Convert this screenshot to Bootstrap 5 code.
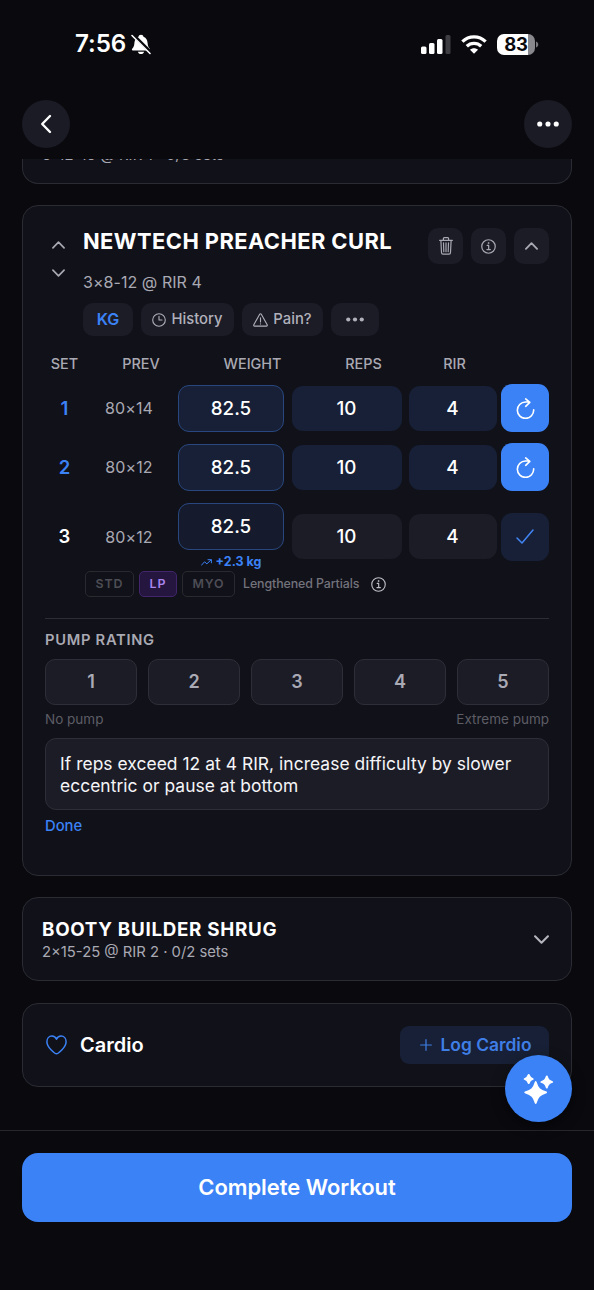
<!DOCTYPE html>
<html lang="en" data-bs-theme="dark">
<head>
<meta charset="utf-8">
<meta name="viewport" content="width=device-width, initial-scale=1">
<title>Workout</title>
<link href="https://cdn.jsdelivr.net/npm/bootstrap@5.3.0/dist/css/bootstrap.min.css" rel="stylesheet">
<style>
:root{--page:#09090e;--panel:#111119;--line:#2b2b34;--surface:#1c1c27;--accent:#3b82f6;--tint:#172036;--soft:#a9a9b3;--dim:#5d5d65}
body{background:var(--page);color:#fff;font-family:Inter,"Liberation Sans",sans-serif;line-height:1;overflow:hidden}
svg{display:block;flex:none}
.ico{fill:none;stroke:currentColor;stroke-linecap:round;stroke-linejoin:round}
.screen{height:1290px}
.statusbar{height:88px;padding:1px 55px 0 75px}
.clock{font-size:24.2px;font-weight:600;letter-spacing:-.1px}
.batt{width:38px;height:21px;border-radius:7px;background:linear-gradient(90deg,#fff 82%,#88888d 82%);color:#09090e;font-size:18.5px;font-weight:700;letter-spacing:-.2px}
.topbar{height:71px;padding:12px 22px 0}
.round-btn{width:48px;height:48px;border-radius:50%;background:#1b1b26;border:0;color:#fff}
.content{padding:0 22px}
.panel{background:var(--panel);border:1px solid var(--line);border-radius:16px}
.cut{height:25px;border-top:0;border-radius:0 0 16px 16px;overflow:hidden;padding-left:19px}
.cut div{font-size:14.8px;line-height:18px;margin-top:-13px;letter-spacing:.15px}
.soft{color:var(--soft)}.dim{color:var(--dim)}.blue,.chip.blue{color:var(--accent)}
.exercise{height:671px;margin-top:21px;padding:22px}
.head{display:grid;grid-template-columns:38px 1fr auto;height:130px}
.mover{width:27px;padding-top:13px;gap:20px}
.ex-title{font-size:21.9px;font-weight:700;line-height:27px;letter-spacing:.43px}
.sub{font-size:16px;line-height:20px;margin-top:17px;letter-spacing:.05px}
.tool{width:35px;height:36px;border-radius:10px;background:var(--surface);border:0;color:var(--soft)}
.chip{height:33px;border-radius:10px;background:var(--surface);border:0;color:#b1b1bb;font-size:14.8px;font-weight:500;white-space:nowrap}
.chips{margin-top:11px;width:300px}
.cols{display:grid;grid-template-columns:39px 114px 109px 113px 69px;height:26px;align-items:center;text-align:center;font-size:14.4px;font-weight:500}
.setrow{display:grid;grid-template-columns:39px 90px 4px 106px 8px 110px 7px 88px 4px 48px;height:48px;align-items:center;text-align:center}
.setrow+.setrow{margin-top:11px}
.num{font-size:18.5px;font-weight:600}
.prev{font-size:16px;letter-spacing:.1px}
.cell{height:45px;border-radius:11px;background:var(--tint);font-size:18.8px;font-weight:500;line-height:45px;padding-right:1px}
.cell.wt{height:47px;border:1px solid #29477e;padding:0}
.cell.plain{background:var(--surface)}
.go{height:48px;border-radius:11px;background:var(--accent);border:0;color:#fff;padding:0}
.tag{height:26px;border:1px solid #292930;border-radius:5px;font-size:12.4px;font-weight:600;letter-spacing:.9px;color:#4d4d55}
.tag.on{background:#24163e;border-color:#41256a;color:#a985f0}
.techs{margin:0 0 0 40px;gap:5px}
.rule{height:1px;background:#2d2d35;margin-top:22px}
.rate{flex:1;height:46px;border:1px solid #2e2e38;border-radius:10px;background:var(--surface);color:#aaaab5;font-size:18px;font-weight:600}
.note{height:72px;border:1px solid #2e2e38;border-radius:11px;background:var(--surface);color:#f5f5f7;padding:14px;font-size:17.4px;letter-spacing:.05px;line-height:21.5px;white-space:nowrap;margin-top:12px}
.next{height:84px;margin-top:21px;padding:2px 22px 0 19px}
.cardio{height:84px;margin-top:22px;padding:0 22px 0 23px}
.log{width:149px;height:38px;border-radius:9px;border:0;background:var(--tint);color:#3f7ee6;font-size:17.4px;font-weight:600}
.foot{height:160px;border-top:1px solid #27272e;padding:22px 22px 0;position:relative}
.finish{height:69px;border-radius:16px;background:var(--accent);border:0;color:#fff;font-size:21.9px;font-weight:600;width:100%}
.fab{position:absolute;right:22px;top:-76px;width:67px;height:67px;border-radius:50%;border:0;background:var(--accent);color:#fff;box-shadow:0 4px 14px rgba(0,0,0,.4)}
</style>
</head>
<body>
<svg width="0" height="0" class="position-absolute">
  <symbol id="up" viewBox="0 0 14 8"><path d="M1 7l6-6 6 6"/></symbol>
  <symbol id="down" viewBox="0 0 14 8"><path d="M1 1l6 6 6-6"/></symbol>
  <symbol id="info" viewBox="0 0 16 16"><circle cx="8" cy="8" r="7.200"/><path d="M6.600 6.800h1.600v4.300M6.300 11.300h3.700"/><circle cx="7.900" cy="4.300" r=".55" fill="currentColor" stroke-width=".7"/></symbol>
  <symbol id="dots" viewBox="0 0 24 6"><g fill="currentColor" stroke="none"><circle cx="3" cy="3" r="2.800"/><circle cx="12" cy="3" r="2.800"/><circle cx="21" cy="3" r="2.800"/></g></symbol>
  <symbol id="redo" viewBox="0 0 20 22"><path d="M18.600 12.400A8.600 8.600 0 1 1 10 4.200h4.300M10.200.9l4.300 3.700-4.300 4.100"/></symbol>
</svg>
<div class="screen d-flex flex-column">
  <div class="statusbar d-flex align-items-center justify-content-between">
    <div class="d-flex align-items-center">
      <span class="clock">7:56</span>
      <svg width="20" height="21" viewBox="0 0 20 21" style="margin-left:5px"><path fill="#fff" d="M10 .8c1.500 0 2.300.9 2.500 1.900 2.800 1 3.900 3.500 4.100 6.400.2 3 .8 4.200 2 5.300.7.700.8 2-.5 2H1.900c-1.300 0-1.200-1.300-.5-2 1.200-1.100 1.800-2.300 2-5.300.2-2.900 1.300-5.400 4.100-6.400C7.700 1.700 8.500.8 10 .8zM6.900 17.700h6.200c-.4 1.500-1.500 2.400-3.100 2.400s-2.700-.9-3.100-2.400z"/><path d="M1.800 .5l18 18" stroke="#09090e" stroke-width="3.300"/><path d="M1 1.500l18 18" stroke="#fff" stroke-width="1.600" stroke-linecap="round"/></svg>
    </div>
    <div class="d-flex align-items-center">
      <svg width="30" height="19" viewBox="0 0 30 19" fill="#fff"><rect y="11.500" width="5.500" height="7.500" rx="1.500"/><rect x="8" y="8" width="5.500" height="11" rx="1.500"/><rect x="16" y="4" width="5.500" height="15" rx="1.500"/><rect x="24.500" width="5" height="19" rx="1.500" fill="#3d3d42"/></svg>
      <svg width="26" height="19" viewBox="0 0 26 19" fill="none" stroke="#fff" stroke-width="3.300" style="margin-left:10px"><path d="M1.400 6.600a16.600 16.600 0 0 1 23.200 0"/><path d="M5.800 11.200a10.400 10.400 0 0 1 14.400 0"/><path fill="#fff" stroke="none" d="M13 18.800l-4-4.100c2.300-2 5.700-2 8 0z"/></svg>
      <div class="batt d-flex align-items-center justify-content-center" style="margin-left:10px">83</div>
      <svg width="3" height="7" viewBox="0 0 3 7" style="margin-left:1px"><path d="M0 .5c3 1 3 5 0 6z" fill="#77777c"/></svg>
    </div>
  </div>
  <div class="topbar d-flex justify-content-between">
    <button class="round-btn d-flex align-items-center justify-content-center p-0"><svg class="ico" width="12" height="20" viewBox="0 0 12 20" stroke-width="2.400"><path d="M10 2L2.200 10 10 18"/></svg></button>
    <button class="round-btn d-flex align-items-center justify-content-center p-0"><svg width="22" height="6"><use href="#dots"/></svg></button>
  </div>
  <main class="content flex-grow-1 overflow-hidden">
    <section class="panel cut soft"><div>8-12-15 @ RIR 1 · 0/3 sets</div></section>

    <section class="panel exercise">
      <div class="head">
        <div class="mover d-flex flex-column align-items-center soft">
          <svg class="ico" width="13" height="8" stroke-width="1.800"><use href="#up"/></svg>
          <svg class="ico" width="13" height="8" stroke-width="1.800"><use href="#down"/></svg>
        </div>
        <div>
          <div class="ex-title text-nowrap">NEWTECH PREACHER CURL</div>
          <div class="sub soft">3×8-12 @ RIR 4</div>
          <div class="chips d-flex gap-2">
            <button class="chip blue fw-semibold" style="width:50px;padding:0 0 2px;font-size:16px">KG</button>
            <button class="chip d-flex align-items-center justify-content-center p-0" style="width:93px;gap:5px"><svg class="ico" width="14" height="14" viewBox="0 0 14 14" stroke-width="1.100"><circle cx="7" cy="7" r="6.300"/><path d="M7 3.300V7h3"/></svg>History</button>
            <button class="chip d-flex align-items-center justify-content-center p-0" style="width:81px;gap:5px"><svg class="ico" width="15" height="14" viewBox="0 0 15 14" stroke-width="1.100"><path d="M6.700 1.200L.8 11.800c-.3.700 0 1.300.8 1.300h11.800c.8 0 1.100-.6.800-1.300L8.300 1.200c-.4-.7-1.200-.7-1.600 0zM7.500 4.700v4.200M7.500 10.700v.2"/></svg>Pain?</button>
            <button class="chip d-flex align-items-center justify-content-center p-0" style="width:48px"><svg width="18" height="5"><use href="#dots"/></svg></button>
          </div>
        </div>
        <div class="d-flex" style="gap:8px">
          <button class="tool d-flex align-items-center justify-content-center p-0"><svg class="ico" width="14" height="18" viewBox="0 0 14 18" stroke-width="1.200"><path d="M.6 3.300h12.800M4.400 3V1.600c0-.6.300-.9.900-.9h3.400c.6 0 .9.300.9.900V3M1.900 3.500l.6 12c0 1 .6 1.600 1.500 1.600h6c.9 0 1.500-.6 1.500-1.600l.6-12M4.500 5.800l.3 8.900M7 5.800v8.900M9.500 5.800l-.3 8.900"/></svg></button>
          <button class="tool d-flex align-items-center justify-content-center p-0"><svg class="ico" width="15" height="15" stroke-width="1.300"><use href="#info"/></svg></button>
          <button class="tool d-flex align-items-center justify-content-center p-0"><svg class="ico" width="13" height="8" stroke-width="2"><use href="#up"/></svg></button>
        </div>
      </div>

      <div class="cols soft" style="margin-top:-7px"><span>SET</span><span>PREV</span><span>WEIGHT</span><span>REPS</span><span>RIR</span></div>
      <div style="padding-top:7px">
        <div class="setrow"><span class="num blue">1</span><span class="prev soft">80×14</span><i></i><div class="cell wt">82.5</div><i></i><div class="cell">10</div><i></i><div class="cell">4</div><i></i><button class="go d-flex align-items-center justify-content-center"><svg class="ico" width="19" height="21" stroke-width="1.700"><use href="#redo"/></svg></button></div>
        <div class="setrow"><span class="num blue">2</span><span class="prev soft">80×12</span><i></i><div class="cell wt">82.5</div><i></i><div class="cell">10</div><i></i><div class="cell">4</div><i></i><button class="go d-flex align-items-center justify-content-center"><svg class="ico" width="19" height="21" stroke-width="1.700"><use href="#redo"/></svg></button></div>
        <div class="setrow" style="height:69px"><span class="num">3</span><span class="prev soft">80×12</span><i></i>
          <div><div class="cell wt" style="background:#151b2d">82.5</div><div class="blue fw-bold d-flex align-items-center justify-content-center" style="font-size:12.500px;height:21px;gap:4px;padding-top:4px"><svg class="ico" width="11" height="7" viewBox="0 0 11 7" stroke-width="1"><path d="M.5 6.200l3-3.400 2.400 2L10 1M7 .7h3.400V3.800"/></svg>+2.3 kg</div></div>
          <i></i><div class="cell plain">10</div><i></i><div class="cell plain">4</div><i></i><button class="go d-flex align-items-center justify-content-center" style="background:var(--tint);color:#4285f4"><svg class="ico" width="18" height="15" viewBox="0 0 18 15" stroke-width="1.500"><path d="M1 9l5 5L17 1"/></svg></button></div>
      </div>
      <div class="techs d-flex align-items-center">
        <span class="tag d-flex align-items-center justify-content-center" style="width:49px">STD</span>
        <span class="tag on d-flex align-items-center justify-content-center" style="width:38px">LP</span>
        <span class="tag d-flex align-items-center justify-content-center" style="width:53px">MYO</span>
        <span class="fw-medium" style="font-size:12.400px;color:#73737c;margin-left:3px;width:123px;font-weight:500;letter-spacing:-.1px">Lengthened Partials</span>
        <svg class="ico" style="color:#c0c0c8" width="15" height="15" stroke-width="1.200"><use href="#info"/></svg>
      </div>
      <div class="rule" style="margin-top:21px"></div>
      <div class="soft fw-semibold" style="font-size:14.700px;letter-spacing:.72px;height:40px;line-height:42px">PUMP RATING</div>
      <div class="d-flex" style="gap:11px"><button class="rate">1</button><button class="rate">2</button><button class="rate">3</button><button class="rate">4</button><button class="rate">5</button></div>
      <div class="dim d-flex justify-content-between align-items-end" style="font-size:13.500px;height:21px"><span>No pump</span><span>Extreme pump</span></div>
      <div class="note">If reps exceed 12 at 4 RIR, increase difficulty by slower<br>eccentric or pause at bottom</div>
      <div class="blue" style="font-size:14.800px;font-weight:500;margin-top:9px">Done</div>
    </section>

    <section class="panel next d-flex align-items-center justify-content-between">
      <div><div class="fw-bold" style="font-size:18.800px;letter-spacing:.7px;line-height:24px">BOOTY BUILDER SHRUG</div><div class="soft" style="font-size:14.800px;line-height:21px">2×15-25 @ RIR 2 · 0/2 sets</div></div>
      <svg class="ico" width="15" height="9" style="color:#b5b5be;margin-bottom:2px" stroke-width="1.900"><use href="#down"/></svg>
    </section>

    <section class="panel cardio d-flex align-items-center justify-content-between">
      <div class="d-flex align-items-center" style="gap:13px"><svg class="ico blue" width="21" height="20" viewBox="0 0 21 20" stroke-width="1.500"><path d="M10.500 18.800C9.300 18.800.9 12.600.9 6.700.9 3.500 3 1.100 5.900 1.100c2.200 0 3.800 1.200 4.600 3.200.8-2 2.400-3.200 4.600-3.200 2.900 0 5 2.400 5 5.600 0 5.900-8.400 12.100-9.600 12.100z"/></svg><span class="fw-semibold" style="font-size:20px">Cardio</span></div>
      <button class="log d-flex align-items-center justify-content-center" style="gap:9px;padding:0 0 0 2px"><svg class="ico" width="12" height="12" viewBox="0 0 13 13" stroke-width="1.300"><path d="M6.500.7v11.600M.7 6.500h11.600"/></svg>Log Cardio</button>
    </section>
  </main>
  <footer class="foot">
    <button class="finish">Complete Workout</button>
    <button class="fab d-flex align-items-center justify-content-center p-0"><svg width="31" height="32" viewBox="0 0 31 32" fill="#fff" stroke="#fff" stroke-width="1.800" stroke-linejoin="round"><path d="M12.700 9c1.900 6.400 3.800 8.300 10.500 10.300-6.700 2.200-8.600 4.100-10.500 10.700-1.900-6.600-3.800-8.500-10.500-10.700C8.900 17.300 10.800 15.400 12.700 9z"/><path d="M5.700 1.800c.9 2.800 1.500 3.400 4.100 4.200-2.600.8-3.200 1.400-4.100 4.200C4.800 7.400 4.200 6.800 1.600 6c2.600-.8 3.200-1.400 4.100-4.200zM23.800 3.300c1.200 3.700 2.200 4.600 5.500 5.700-3.300 1.100-4.300 2-5.500 5.700-1.200-3.700-2.200-4.600-5.500-5.700 3.300-1.100 4.300-2 5.500-5.700z"/></svg></button>
  </footer>
</div>
<script src="https://cdn.jsdelivr.net/npm/bootstrap@5.3.0/dist/js/bootstrap.bundle.min.js"></script>
</body>
</html>
